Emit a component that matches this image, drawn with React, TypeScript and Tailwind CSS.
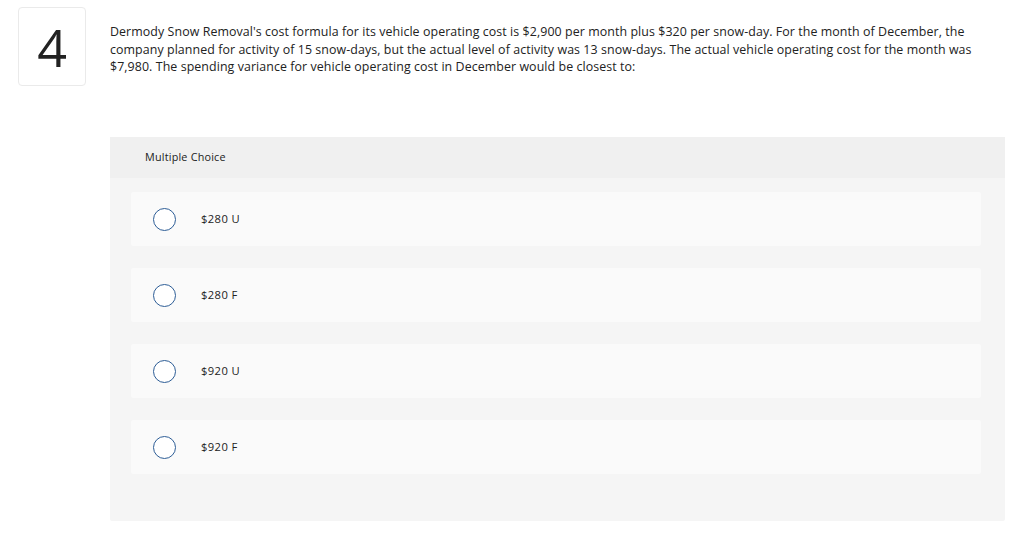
import React from 'react'

const options = ['$280 U', '$280 F', '$920 U', '$920 F']

export default function App() {
  return (
    <div className="w-[1024px] h-[548px] bg-white text-[#333] font-['Open_Sans',sans-serif] overflow-hidden">
      <div className="flex pt-[7px] pl-[18px]">
        <div className="w-[68px] h-[79px] shrink-0 border border-[#eaeaea] rounded-[4px] flex items-center justify-center">
          <span className="text-[52px] leading-none font-normal text-[#222] font-['Open_Sans',sans-serif]">4</span>
        </div>
        <p className="ml-[24px] mt-[16px] w-[868px] text-[12.4px] tracking-[0.08px] leading-[17.7px] text-[#222]">
          Dermody Snow Removal's cost formula for its vehicle operating cost is $2,900 per month plus $320 per snow-day. For the month of December, the company planned for activity of 15 snow-days, but the actual level of activity was 13 snow-days. The actual vehicle operating cost for the month was $7,980. The spending variance for vehicle operating cost in December would be closest to:
        </p>
      </div>
      <div className="ml-[110px] mt-[51px] w-[895px] h-[384px] bg-[#f5f5f5] rounded-[2px]">
        <div className="h-[41px] bg-[#f0f0f0] pl-[35px] flex items-center text-[10.8px] tracking-[0.2px] text-[#222]">Multiple Choice</div>
        <div className="pt-[14px] pl-[21px] pr-[24px] flex flex-col gap-[22px]">
          {options.map(o => (
            <div key={o} className="h-[54px] bg-[#fafafa] rounded-[2px] flex items-center pl-[22px]">
              <span className="w-[23px] h-[23px] rounded-full border border-[#2d5d96] bg-white shrink-0" />
              <span className="ml-[25px] pt-[1px] text-[11.2px] tracking-[0.4px] text-[#222]">{o}</span>
            </div>
          ))}
        </div>
      </div>
    </div>
  )
}
